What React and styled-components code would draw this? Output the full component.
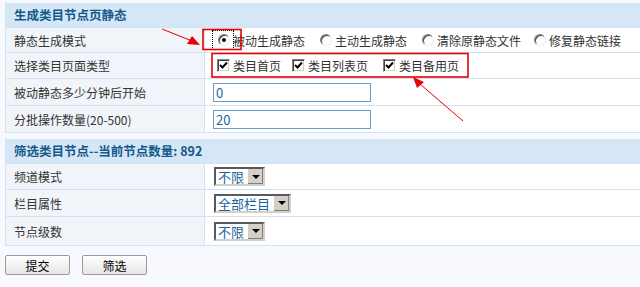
import React from 'react';
import styled, {createGlobalStyle} from 'styled-components';

const GlobalStyle = createGlobalStyle`
  html, body {
    margin: 0;
    padding: 0;
    background: #f8f9fe;
    overflow: hidden;
  }
  body {
    font-family: "Noto Sans CJK SC", "Liberation Sans", sans-serif;
    font-size: 12px;
    color: #333;
  }
`;

const Page = styled.div`
  position: relative;
  width: 640px;
  height: 287px;
  padding: 3px 0 0 5px;
  box-sizing: border-box;
`;

const Section = styled.div`
  width: 660px;
  border-left: 1px solid #cfe3f4;
  margin-bottom: ${props => props.gap || 0}px;
`;

const Header = styled.div`
  height: 24px;
  line-height: 24px;
  background: #d5e7f7;
  border-bottom: 1px solid #cfe3f4;
  padding-left: 8px;
  font-weight: bold;
  font-size: 12.5px;
  color: #14598a;
`;

const Row = styled.div`
  display: grid;
  grid-template-columns: 199px 1fr;
  height: ${props => props.h}px;
  border-bottom: 1px solid #cfe3f4;
`;

const Label = styled.div`
  background: #f1f5f9;
  border-right: 1px solid #cfe3f4;
  padding-left: 8px;
  display: flex;
  align-items: center;
`;

const Value = styled.div`
  background: #fff;
  display: flex;
  align-items: center;
  padding-left: ${props => props.pad || 8}px;
`;

const Option = styled.label`
  display: flex;
  align-items: center;
  margin-right: ${props => props.mr || 14}px;
  white-space: nowrap;
`;

const Focus = styled.span`
  display: inline-flex;
  align-items: center;
  padding: 3px 0 3px 5px;
  margin-left: -5px;
  outline: 1px dotted #000;
`;

const Radio = styled.span`
  position: relative;
  width: 12px;
  height: 12px;
  box-sizing: border-box;
  border-radius: 50%;
  border: 1px solid;
  border-color: #808080 #ececec #ececec #808080;
  box-shadow: inset 1px 1px 0 #404040;
  background: #fff;
  margin-right: 3px;
  flex: none;
  &::after {
    content: '';
    display: ${props => (props.checked ? 'block' : 'none')};
    position: absolute;
    left: 3px;
    top: 3px;
    width: 4px;
    height: 4px;
    border-radius: 50%;
    background: #000;
  }
`;

const Check = styled.span`
  width: 13px;
  height: 13px;
  box-sizing: border-box;
  border: 1px solid;
  border-color: #808080 #fff #fff #808080;
  box-shadow: inset 1px 1px 0 #404040, inset -1px -1px 0 #d4d0c8;
  background: #fff;
  margin-right: 3px;
  flex: none;
  display: flex;
  align-items: center;
  justify-content: center;
`;

const TextInput = styled.div`
  width: 154px;
  height: 17px;
  border: 1px solid #6c9bcc;
  background: #fff;
  color: #1b67a3;
  font-size: 13px;
  line-height: 17px;
  padding-left: 2px;
`;

const Select = styled.div`
  display: flex;
  height: 19px;
  box-sizing: border-box;
  border: 2px solid;
  border-color: #5a5a5a #d4d0c8 #d4d0c8 #5a5a5a;
  background: #fff;
  margin-left: 1px;
`;

const SelectText = styled.span`
  color: #17649e;
  font-size: 13px;
  line-height: 15px;
  padding: 0 3px 0 2px;
`;

const SelectBtn = styled.span`
  width: 15px;
  background: #d4d0c8;
  border-left: 1px solid #fff;
  box-shadow: inset -1px -1px 0 #808080;
  display: flex;
  align-items: center;
  justify-content: center;
  &::after {
    content: '';
    border-left: 4px solid transparent;
    border-right: 4px solid transparent;
    border-top: 4px solid #000;
  }
`;

const Buttons = styled.div`
  display: flex;
  gap: 12px;
  margin-top: 9px;
`;

const Button = styled.button`
  width: 65px;
  height: 20px;
  padding: 0;
  border: 1px solid #9a9a9a;
  border-radius: 2px;
  background: linear-gradient(#ffffff, #e6e6e6);
  font-family: inherit;
  font-size: 12px;
  color: #000;
`;

const Overlay = styled.svg`
  position: absolute;
  left: 0;
  top: 0;
  pointer-events: none;
`;

const Tick = () => (
  <svg width="9" height="9" viewBox="0 0 9 9">
    <path d="M1 4 L3.5 6.5 L8 1.5" stroke="#000" strokeWidth="2" fill="none" />
  </svg>
);

const radios = [
  {text: '被动生成静态', checked: true, mr: 15},
  {text: '主动生成静态', mr: 15},
  {text: '清除原静态文件', mr: 13},
  {text: '修复静态链接'},
];

const checks = ['类目首页', '类目列表页', '类目备用页'];

export default function App() {
  return (
    <Page>
      <GlobalStyle />
      <Section gap={6}>
        <Header>生成类目节点页静态</Header>
        <Row h={24}>
          <Label>静态生成模式</Label>
          <Value pad={13}>
            {radios.map((r, i) =>
              r.checked ? (
                <Option key={i} mr={r.mr}>
                  <Focus>
                    <Radio checked />
                  </Focus>
                  {r.text}
                </Option>
              ) : (
                <Option key={i} mr={r.mr}>
                  <Radio />
                  {r.text}
                </Option>
              )
            )}
          </Value>
        </Row>
        <Row h={25}>
          <Label>选择类目页面类型</Label>
          <Value pad={12}>
            {checks.map((c, i) => (
              <Option key={i} mr={i === 0 ? 11 : 15}>
                <Check>
                  <Tick />
                </Check>
                {c}
              </Option>
            ))}
          </Value>
        </Row>
        <Row h={26}>
          <Label>被动静态多少分钟后开始</Label>
          <Value>
            <TextInput>0</TextInput>
          </Value>
        </Row>
        <Row h={26}>
          <Label>分批操作数量(20-500)</Label>
          <Value>
            <TextInput>20</TextInput>
          </Value>
        </Row>
      </Section>
      <Section>
        <Header>筛选类目节点--当前节点数量: 892</Header>
        <Row h={25}>
          <Label>频道模式</Label>
          <Value>
            <Select>
              <SelectText>不限</SelectText>
              <SelectBtn />
            </Select>
          </Value>
        </Row>
        <Row h={26}>
          <Label>栏目属性</Label>
          <Value>
            <Select>
              <SelectText>全部栏目</SelectText>
              <SelectBtn />
            </Select>
          </Value>
        </Row>
        <Row h={28}>
          <Label>节点级数</Label>
          <Value>
            <Select>
              <SelectText>不限</SelectText>
              <SelectBtn />
            </Select>
          </Value>
        </Row>
      </Section>
      <Buttons>
        <Button>提交</Button>
        <Button>筛选</Button>
      </Buttons>
      <Overlay width="640" height="287">
        <rect x="203" y="29.5" width="38" height="20" fill="none" stroke="#e60000" strokeWidth="1.6" />
        <rect x="212" y="53.5" width="256" height="23.5" fill="none" stroke="#e60000" strokeWidth="1.6" />
        <line x1="162" y1="29" x2="192" y2="41" stroke="#e60000" strokeWidth="1" />
        <polygon points="200,45 187,44 192,36" fill="#e60000" />
        <line x1="463" y1="121" x2="420" y2="84" stroke="#e60000" strokeWidth="1" />
        <polygon points="413,77 424,82 417,88" fill="#e60000" />
      </Overlay>
    </Page>
  );
}
